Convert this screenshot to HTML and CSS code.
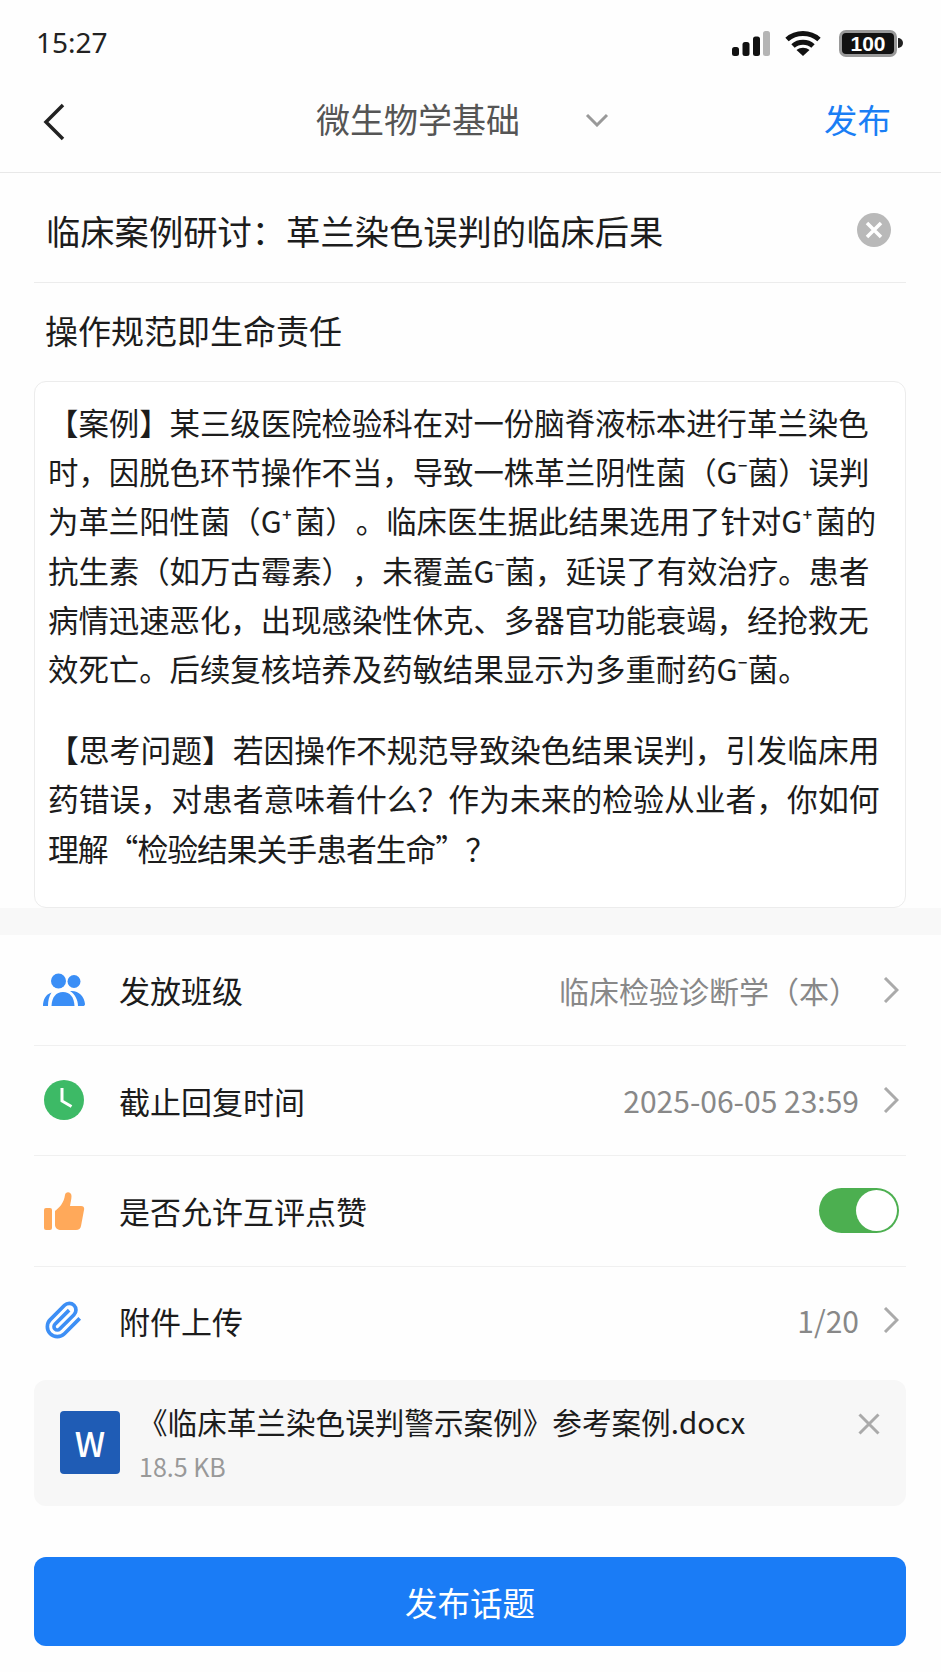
FILE: index.html
```html
<!DOCTYPE html>
<html lang="zh-CN">
<head>
    <meta charset="UTF-8">
    <meta name="viewport" content="width=device-width, initial-scale=1.0">
    <title>发布话题</title>
    <link rel="stylesheet" href="styles.css">
</head>
<body>
    <div class="page">
        <div class="status-bar">
            <span class="time">15:27</span>
            <div class="status-icons">
                <svg class="signal" width="38" height="25" viewBox="0 0 38 25">
                    <rect x="0" y="16" width="7" height="9" rx="2.5" fill="#111"/>
                    <rect x="10.500" y="11" width="7" height="14" rx="2.5" fill="#111"/>
                    <rect x="21" y="5.500" width="7" height="19.500" rx="2.500" fill="#111"/>
                    <rect x="31" y="0" width="7" height="25" rx="2.500" fill="#b5b5b5"/>
                </svg>
                <svg class="wifi" width="36" height="26" viewBox="0 0 36 26">
                    <path d="M2 9.500C11 1.500 25 1.500 34 9.500" fill="none" stroke="#111" stroke-width="5"/>
                    <path d="M8 16C13.500 11 22.500 11 28 16" fill="none" stroke="#111" stroke-width="5"/>
                    <path d="M11.500 20L18 26L24.500 20C20.500 17 15.500 17 11.500 20Z" fill="#111"/>
                </svg>
                <div class="battery">
                    <div class="battery-body">100</div>
                    <div class="battery-tip"></div>
                </div>
            </div>
        </div>

        <div class="nav-bar">
            <svg class="back" width="24" height="38" viewBox="0 0 24 38">
                <path d="M21 2L4 19L21 36" fill="none" stroke="#222" stroke-width="3.500"/>
            </svg>
            <div class="course">微生物学基础</div>
            <svg class="course-arrow" width="24" height="14" viewBox="0 0 24 14">
                <path d="M2 2L12 12L22 2" fill="none" stroke="#999" stroke-width="3"/>
            </svg>
            <a class="publish-link">发布</a>
        </div>

        <div class="title-row">
            <span class="title-text">临床案例研讨：革兰染色误判的临床后果</span>
            <svg class="clear" width="34" height="34" viewBox="0 0 34 34">
                <circle cx="17" cy="17" r="17" fill="#b9b9b9"/>
                <path d="M10 10L24 24M24 10L10 24" stroke="#fff" stroke-width="3.500"/>
            </svg>
        </div>

        <div class="subtitle">操作规范即生命责任</div>

        <div class="content-card">
            <p class="case">【案例】某三级医院检验科在对一份脑脊液标本进行革兰染色<br>时，因脱色环节操作不当，导致一株革兰阴性菌（G⁻菌）误判<br>为革兰阳性菌（G<span class="plus">⁺</span>菌）。临床医生据此结果选用了针对G<span class="plus">⁺</span>菌的<br>抗生素（如万古霉素），未覆盖G⁻菌，延误了有效治疗。患者<br>病情迅速恶化，出现感染性休克、多器官功能衰竭，经抢救无<br>效死亡。后续复核培养及药敏结果显示为多重耐药G⁻菌。</p>
            <p class="question">【思考问题】若因操作不规范导致染色结果误判，引发临床用<br>药错误，对患者意味着什么？作为未来的检验从业者，你如何<br><span class="tight">理解“检验结果关手患者生命”？</span></p>
        </div>

        <div class="band"></div>

        <div class="settings">
            <div class="row">
                <svg class="row-icon" width="42" height="34" viewBox="0 0 42 34">
                    <circle cx="15.500" cy="8" r="7.500" fill="#3a8ef6"/>
                    <circle cx="31" cy="8.500" r="6.500" fill="#3a8ef6"/>
                    <path d="M8.500 33C9 24 13 19 20 19C27 19 31 24 31.500 33Z" fill="#3a8ef6"/>
                    <path d="M0 33C0 27 2.500 21.500 8.500 19.500C6 23 5 28 5 33Z" fill="#3a8ef6"/>
                    <path d="M27 18C35 17 41.500 23 42 31C42 32.500 41 33 40 33H35C35 27 32 21 27 18Z" fill="#3a8ef6"/>
                </svg>
                <span class="row-label">发放班级</span>
                <span class="row-value">临床检验诊断学（本）</span>
                <svg class="chevron" width="16" height="26" viewBox="0 0 16 26">
                    <path d="M2 1L14 13L2 25" fill="none" stroke="#aaa" stroke-width="3"/>
                </svg>
            </div>
            <div class="row">
                <svg class="row-icon" width="42" height="40" viewBox="0 0 42 40">
                    <circle cx="21" cy="20" r="20" fill="#3dba66"/>
                    <path d="M19 8V21L28.500 26.500" fill="none" stroke="#fff" stroke-width="3"/>
                </svg>
                <span class="row-label">截止回复时间</span>
                <span class="row-value">2025-06-05 23:59</span>
                <svg class="chevron" width="16" height="26" viewBox="0 0 16 26">
                    <path d="M2 1L14 13L2 25" fill="none" stroke="#aaa" stroke-width="3"/>
                </svg>
            </div>
            <div class="row">
                <svg class="row-icon" width="42" height="38" viewBox="0 0 42 38">
                    <rect x="1" y="16" width="8" height="22" rx="2" fill="#ffa95a"/>
                    <path d="M12 19C16 16 21 11 22 3C22.500 -1 28.500 -0.500 28.500 4C28.500 7 27.500 11 27 14H38C41 14 41.500 16 41 18L38 34C37.500 36.500 36 38 33 38H18C15 38 12 36 12 33Z" fill="#ffa95a"/>
                </svg>
                <span class="row-label">是否允许互评点赞</span>
                <span class="switch"><span class="knob"></span></span>
            </div>
            <div class="row">
                <svg class="row-icon" width="42" height="40" viewBox="0 0 24 24">
                    <path d="M21.44 11.05L12.25 20.24A6 6 0 0 1 3.76 11.75L12.33 3.18A4 4 0 1 1 18 8.840L9.410 17.410A2 2 0 0 1 6.580 14.580L15.070 6.100" fill="none" stroke="#3d8ff5" stroke-width="2.200"/>
                </svg>
                <span class="row-label">附件上传</span>
                <span class="row-value">1/20</span>
                <svg class="chevron" width="16" height="26" viewBox="0 0 16 26">
                    <path d="M2 1L14 13L2 25" fill="none" stroke="#aaa" stroke-width="3"/>
                </svg>
            </div>
        </div>

        <div class="file-card">
            <div class="file-icon">W</div>
            <div class="file-info">
                <div class="file-name">《临床革兰染色误判警示案例》参考案例.docx</div>
                <div class="file-size">18.5 KB</div>
            </div>
            <svg class="file-close" width="22" height="22" viewBox="0 0 22 22">
                <path d="M1.500 1.500L20.500 20.500M20.500 1.500L1.500 20.500" stroke="#aaa" stroke-width="3"/>
            </svg>
        </div>

        <button class="submit-btn">发布话题</button>
    </div>
</body>
</html>
```

FILE: styles.css
```css
* {
    margin: 0;
    padding: 0;
    box-sizing: border-box;
}

body {
    font-family: "Noto Sans CJK SC", "Noto Sans", sans-serif;
    background: #fefefe;
    color: #1c1c1c;
    text-spacing-trim: space-all;
}

.page {
    width: 941px;
    height: 1672px;
    overflow: hidden;
}

.status-bar {
    height: 72px;
    padding: 12px 38px 0 36px;
    display: flex;
    justify-content: space-between;
    align-items: center;
}

.time {
    font-family: "Noto Sans", sans-serif;
    font-size: 28px;
    color: #222;
}

.status-icons {
    display: flex;
    align-items: center;
    margin-top: 2px;
}

.signal {
    margin-right: 15px;
}

.wifi {
    margin-right: 18px;
}

.battery {
    display: flex;
    align-items: center;
}

.battery-body {
    width: 58px;
    height: 27px;
    background: #111;
    border: 3px solid #999;
    border-radius: 7px;
    color: #fff;
    font-family: "Liberation Sans", sans-serif;
    font-size: 21px;
    font-weight: bold;
    line-height: 21px;
    text-align: center;
}

.battery-tip {
    width: 5px;
    height: 10px;
    margin-left: 1px;
    background: #222;
    border-radius: 0 5px 5px 0;
}

.nav-bar {
    height: 101px;
    padding: 0 50px 7px 42px;
    display: flex;
    align-items: center;
    border-bottom: 1px solid #e8e8e8;
}

.back {
    margin: 7px 250px 0 0;
}

.course {
    font-size: 34px;
    color: #555;
}

.course-arrow {
    margin: 3px 0 0 65px;
}

.publish-link {
    margin-left: auto;
    font-size: 33.500px;
    color: #1a7ef5;
}

.title-row {
    height: 110px;
    margin: 0 35px 0 34px;
    padding: 4px 15px 0 12px;
    display: flex;
    justify-content: space-between;
    align-items: center;
    border-bottom: 1px solid #ececec;
}

.title-text {
    font-size: 34.300px;
}

.subtitle {
    height: 98px;
    padding-left: 45px;
    font-size: 33px;
    line-height: 94px;
}

.content-card {
    height: 527px;
    margin: 0 35px 0 34px;
    padding: 16px 10px 0 13px;
    background: #fff;
    border: 1px solid #ececec;
    border-radius: 12px;
    font-size: 30.400px;
    line-height: 49.200px;
    white-space: nowrap;
}

.content-card p {
    margin-bottom: 31px;
}

.content-card .question {
    font-size: 30.800px;
}

.plus {
    letter-spacing: 3px;
}

.tight {
    letter-spacing: -1px;
}

.band {
    height: 27px;
    background: #f8f8f8;
}

.settings {
    margin: 0 35px 0 34px;
}

.row {
    height: 110.500px;
    padding: 0 7px 0 9px;
    display: flex;
    align-items: center;
    border-bottom: 1px solid #f0f0f0;
}

.row:last-child {
    padding-bottom: 3px;
    border-bottom: none;
}

.row-icon {
    margin-right: 34px;
}

.row-label {
    font-size: 31px;
}

.row-value {
    margin-left: auto;
    margin-right: 24px;
    font-size: 30px;
    color: #888;
}

.chevron {
    flex-shrink: 0;
}

.switch {
    width: 80px;
    height: 45px;
    margin-left: auto;
    padding: 2px;
    display: flex;
    justify-content: flex-end;
    background: #4caf50;
    border-radius: 23px;
}

.knob {
    width: 41px;
    height: 41px;
    background: #fff;
    border-radius: 50%;
}

.file-card {
    height: 126px;
    margin: 3px 35px 0 34px;
    padding: 31px 26px 0 26px;
    display: flex;
    align-items: flex-start;
    background: #f7f7f7;
    border-radius: 12px;
}

.file-icon {
    width: 60px;
    height: 63px;
    margin-right: 18px;
    background: #1f5cb5;
    border-radius: 4px;
    color: #fff;
    font-size: 34px;
    font-weight: 500;
    line-height: 63px;
    text-align: center;
}

.file-info {
    flex: 1;
    margin-top: -11px;
}

.file-name {
    font-size: 29.600px;
    line-height: 44px;
}

.file-size {
    margin: 4px 0 0 1px;
    font-size: 25px;
    line-height: 36px;
    color: #999;
}

.file-close {
    margin-top: 2px;
}

.submit-btn {
    display: block;
    width: 872px;
    height: 89px;
    margin: 51px 0 0 34px;
    background: #1a7cf6;
    border: none;
    border-radius: 12px;
    color: #fff;
    font-family: inherit;
    font-size: 32.500px;
}
```
